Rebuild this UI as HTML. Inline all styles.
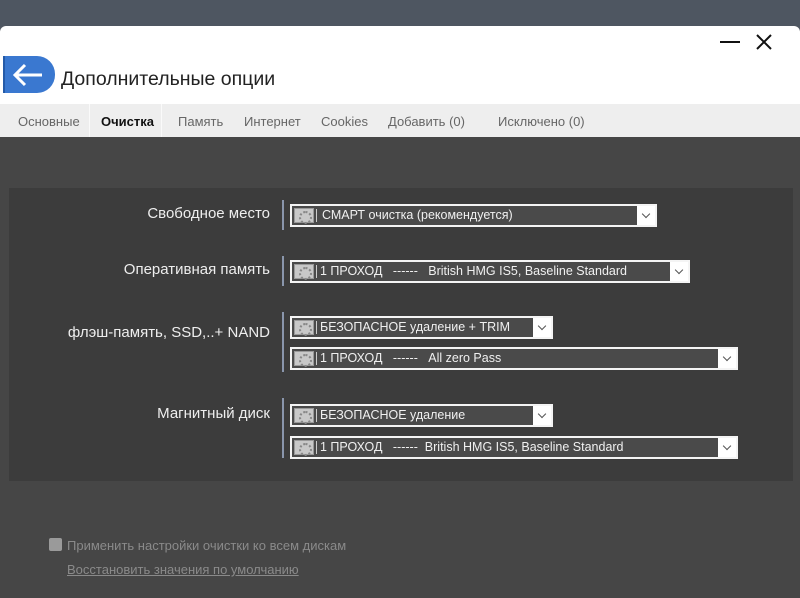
<!DOCTYPE html>
<html><head><meta charset="utf-8"><style>
*{margin:0;padding:0;box-sizing:border-box}
body{width:800px;height:598px;overflow:hidden;background:#4e5661;font-family:"Liberation Sans","DejaVu Sans",sans-serif;position:relative}
.a{position:absolute}
.win{left:0;top:26px;width:800px;height:572px;background:#464646;border-radius:6px 6px 0 0;overflow:hidden}
.hdr{left:0;top:0;width:800px;height:78px;background:#fff}
.tabs{left:0;top:78px;width:800px;height:33px;background:#eeeeee;font-size:13px;color:#666}
.tabs span{position:absolute;top:10px}
.panel{left:9px;top:162px;width:784px;height:293px;background:#3c3c3c}
.lbl{color:#eee;font-size:15px;text-align:right;width:260px;left:10px}
.vl{left:282px;width:2px;background:#8a96ac}
.cb{left:290px;height:23px;border:2px solid #f4f4f4;background:#4a4a4a;color:#f0f0f0;font-size:12.5px;line-height:19px;padding-left:30px;white-space:pre}
.cb .ic{position:absolute;left:2px;top:2px;width:20px;height:15px;background:#c8c8c8;border:1px solid #999}
.cb .ic::after{content:"";position:absolute;left:4px;top:2px;width:9px;height:9px;border-radius:50%;border:2px dotted #888}
.cb .sep{position:absolute;left:24px;top:3px;width:1px;height:13px;background:#ccc}
.cb .dd{position:absolute;right:0;top:0;width:18px;height:19px;background:#fff}
.cb .dd::after{content:"";position:absolute;left:6px;top:5px;width:5px;height:5px;border-right:1px solid #555;border-bottom:1px solid #555;transform:rotate(45deg)}
</style></head><body>
<div class="a win">
 <div class="a hdr">
  <div class="a" style="left:3px;top:30px;width:52px;height:37px;background:#3a78d0;border-radius:0 18px 18px 0"></div>
  <div class="a" style="left:3px;top:30px;width:2px;height:37px;background:#245aa8"></div>
  <svg class="a" style="left:10px;top:36px" width="36" height="26" viewBox="0 0 36 26"><path d="M32 13H5M15 3L5 13l10 10" stroke="#fff" stroke-width="3" fill="none"/></svg>
  <div class="a" style="left:61px;top:42px;font-size:19.5px;color:#222">Дополнительные опции</div>
  <div class="a" style="left:720px;top:15px;width:20px;height:2px;background:#111"></div>
  <svg class="a" style="left:755px;top:7px" width="18" height="18"><path d="M2 2L16 16M16 2L2 16" stroke="#111" stroke-width="2"/></svg>
 </div>
 <div class="a tabs">
  <span style="left:18px">Основные</span>
  <div class="a" style="left:89px;top:0;width:1px;height:33px;background:#fafafa"></div>
  <span style="left:101px;color:#111;font-weight:bold">Очистка</span>
  <div class="a" style="left:161px;top:0;width:1px;height:33px;background:#fafafa"></div>
  <span style="left:178px">Память</span>
  <span style="left:244px">Интернет</span>
  <span style="left:321px">Cookies</span>
  <span style="left:388px">Добавить (0)</span>
  <span style="left:498px">Исключено (0)</span>
 </div>
 <div class="a panel"></div>
 <div class="a lbl" style="top:179px">Свободное место</div>
 <div class="a lbl" style="top:235px">Оперативная память</div>
 <div class="a lbl" style="top:298px">флэш-память, SSD,..+ NAND</div>
 <div class="a lbl" style="top:379px">Магнитный диск</div>
 <div class="a vl" style="top:174px;height:30px"></div>
 <div class="a vl" style="top:230px;height:30px"></div>
 <div class="a vl" style="top:286px;height:60px"></div>
 <div class="a vl" style="top:372px;height:60px"></div>
 <div class="a cb" style="top:178px;width:367px"><i class="ic"></i><i class="sep"></i>СМАРТ очистка (рекомендуется)<i class="dd"></i></div>
 <div class="a cb" style="top:234px;width:400px;padding-left:28px"><i class="ic"></i><i class="sep"></i>1 ПРОХОД   ------   British HMG IS5, Baseline Standard<i class="dd"></i></div>
 <div class="a cb" style="top:290px;width:263px;padding-left:28px"><i class="ic"></i><i class="sep"></i>БЕЗОПАСНОЕ удаление + TRIM<i class="dd"></i></div>
 <div class="a cb" style="top:321px;width:448px;padding-left:28px"><i class="ic"></i><i class="sep"></i>1 ПРОХОД   ------   All zero Pass<i class="dd"></i></div>
 <div class="a cb" style="top:378px;width:263px;padding-left:28px"><i class="ic"></i><i class="sep"></i>БЕЗОПАСНОЕ удаление<i class="dd"></i></div>
 <div class="a cb" style="top:410px;width:448px;padding-left:28px"><i class="ic"></i><i class="sep"></i>1 ПРОХОД   ------  British HMG IS5, Baseline Standard<i class="dd"></i></div>
 <div class="a" style="left:49px;top:512px;width:13px;height:13px;background:#9a9a9a;border-radius:2px"></div>
 <div class="a" style="left:67px;top:512px;font-size:13px;color:#8a8a8a">Применить настройки очистки ко всем дискам</div>
 <div class="a" style="left:67px;top:536px;font-size:13px;color:#8a8a8a;text-decoration:underline">Восстановить значения по умолчанию</div>
</div>
</body></html>
